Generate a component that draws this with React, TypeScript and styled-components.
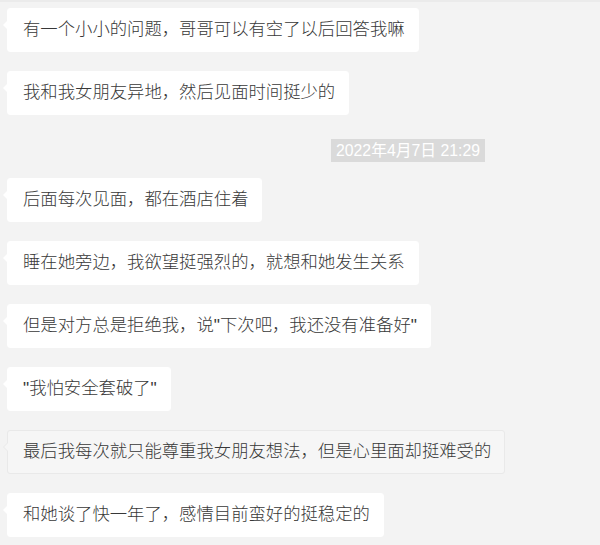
import styled, { createGlobalStyle } from 'styled-components'

const GlobalStyle = createGlobalStyle`
  html, body {
    margin: 0;
    padding: 0;
    background: #f3f3f3;
  }
  body {
    font-family: "Liberation Sans", "Noto Sans CJK SC", sans-serif;
  }
`

const Root = styled.div`
  width: 600px;
  height: 545px;
  box-sizing: border-box;
  border-top: 2px solid #ebebeb;
  padding: 6px 0 0 7px;
  display: flex;
  flex-direction: column;
  align-items: flex-start;
  overflow: hidden;
  background: #f3f3f3;
`

const Row = styled.div`
  flex-shrink: 0;
  margin-bottom: 19px;
  display: flex;
`

const Bubble = styled.div<{ $active?: boolean }>`
  position: relative;
  box-sizing: border-box;
  height: 44px;
  padding: 0 13px 0 15px;
  display: flex;
  align-items: center;
  background: ${(p) => (p.$active ? '#f6f6f6' : '#ffffff')};
  border: 1px solid ${(p) => (p.$active ? '#e9e9e9' : '#ffffff')};
  border-radius: 3px;
  color: #383838;
  font-family: "Liberation Sans", "Noto Sans CJK SC", sans-serif;
  font-size: 17.35px;
  font-weight: 300;
  line-height: 1;
  white-space: nowrap;

  &::before {
    content: '';
    position: absolute;
    left: -5px;
    top: 11px;
    border-style: solid;
    border-width: 5px 5px 5px 0;
    border-color: transparent ${(p) => (p.$active ? '#e9e9e9' : '#ffffff')} transparent transparent;
  }

  &::after {
    content: '';
    position: absolute;
    left: -4px;
    top: 11px;
    border-style: solid;
    border-width: 5px 5px 5px 0;
    border-color: transparent ${(p) => (p.$active ? '#f6f6f6' : '#ffffff')} transparent transparent;
  }
`

const Stamp = styled.div`
  flex-shrink: 0;
  margin: 5px 0 16px 324px;
  box-sizing: border-box;
  height: 23px;
  padding: 0 5px;
  display: flex;
  align-items: center;
  background: #dadada;
  color: #ffffff;
  font-family: "Liberation Sans", "Noto Sans CJK SC", sans-serif;
  font-size: 15.8px;
  line-height: 1;
  white-space: nowrap;
`

const before = [
  '有一个小小的问题，哥哥可以有空了以后回答我嘛',
  '我和我女朋友异地，然后见面时间挺少的',
]

const after = [
  { text: '后面每次见面，都在酒店住着' },
  { text: '睡在她旁边，我欲望挺强烈的，就想和她发生关系' },
  { text: '但是对方总是拒绝我，说"下次吧，我还没有准备好"' },
  { text: '"我怕安全套破了"' },
  { text: '最后我每次就只能尊重我女朋友想法，但是心里面却挺难受的', active: true },
  { text: '和她谈了快一年了，感情目前蛮好的挺稳定的' },
]

export default function App() {
  return (
    <>
      <GlobalStyle />
      <Root>
        {before.map((t) => (
          <Row key={t}>
            <Bubble>{t}</Bubble>
          </Row>
        ))}
        <Stamp>2022年4月7日 21:29</Stamp>
        {after.map((m) => (
          <Row key={m.text}>
            <Bubble $active={m.active}>{m.text}</Bubble>
          </Row>
        ))}
      </Root>
    </>
  )
}
